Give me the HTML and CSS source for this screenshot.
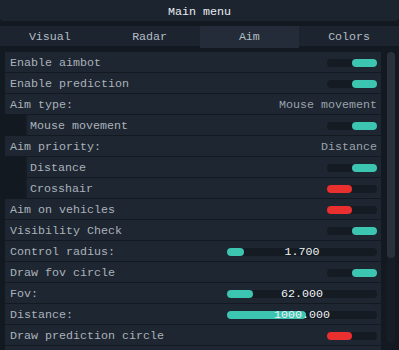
FILE: index.html
```html
<!DOCTYPE html>
<html lang="en">
<head>
    <meta charset="UTF-8">
    <meta name="viewport" content="width=device-width, initial-scale=1.0">
    <title>Main menu</title>
    <link rel="stylesheet" href="styles.css">
</head>
<body>
    <div class="titlebar">Main menu</div>

    <div class="tabs">
        <div class="tab">Visual</div>
        <div class="tab">Radar</div>
        <div class="tab active">Aim</div>
        <div class="tab">Colors</div>
    </div>

    <main class="content">
        <section class="list">
            <div class="row"><span>Enable aimbot</span><span class="toggle on"></span></div>
            <div class="row"><span>Enable prediction</span><span class="toggle on"></span></div>
            <div class="row"><span>Aim type:</span><span class="value">Mouse movement</span></div>
            <div class="row sub"><span>Mouse movement</span><span class="toggle on"></span></div>
            <div class="row"><span>Aim priority:</span><span class="value">Distance</span></div>
            <div class="row sub"><span>Distance</span><span class="toggle on"></span></div>
            <div class="row sub"><span>Crosshair</span><span class="toggle off"></span></div>
            <div class="row"><span>Aim on vehicles</span><span class="toggle off"></span></div>
            <div class="row"><span>Visibility Check</span><span class="toggle on"></span></div>
            <div class="row">
                <span>Control radius:</span>
                <span class="slider"><span class="fill" style="width: 17px"></span><span class="num">1.700</span></span>
            </div>
            <div class="row"><span>Draw fov circle</span><span class="toggle on"></span></div>
            <div class="row">
                <span>Fov:</span>
                <span class="slider"><span class="fill" style="width: 26px"></span><span class="num">62.000</span></span>
            </div>
            <div class="row">
                <span>Distance:</span>
                <span class="slider"><span class="fill" style="width: 79px"></span><span class="num">1000.000</span></span>
            </div>
            <div class="row"><span>Draw prediction circle</span><span class="toggle off"></span></div>
            <div class="row"></div>
        </section>

        <div class="scrollbar"><div class="thumb"></div></div>
    </main>
</body>
</html>
```

FILE: styles.css
```css
body {
    margin: 0;
    padding: 0;
    height: 350px;
    overflow: hidden;
    background-color: #131920;
    font-family: "Liberation Mono", "DejaVu Sans Mono", monospace;
    font-size: 11.67px;
    color: #aab3bc;
}

.titlebar {
    height: 21px;
    line-height: 24px;
    text-align: center;
    color: #e8ecef;
    background-color: #1c2430;
    border-radius: 0 0 4px 4px;
}

.tabs {
    display: grid;
    grid-template-columns: repeat(4, 1fr);
    height: 20px;
    margin-top: 5px;
    background-color: #1c2430;
}

.tab {
    line-height: 22px;
    text-align: center;
    color: #b4bcc4;
}

.tab.active {
    background-color: #232c38;
}

.content {
    display: flex;
    padding: 6px 0 0 5px;
}

.list {
    display: flex;
    flex-direction: column;
    gap: 1px;
    width: 376px;
}

.row {
    display: flex;
    align-items: center;
    justify-content: space-between;
    flex-shrink: 0;
    height: 20px;
    padding: 1px 4px 0 5px;
    box-sizing: border-box;
    background-color: #1e2631;
}

.row.sub {
    margin-left: 20px;
    border-left: 2px solid #161c24;
    padding-left: 3px;
}

.value {
    color: #9aa3ac;
}

.toggle {
    position: relative;
    width: 50px;
    height: 8px;
    border-radius: 4px;
    background-color: #151b23;
}

.toggle::after {
    content: "";
    position: absolute;
    top: 0;
    width: 25px;
    height: 8px;
    border-radius: 4px;
}

.toggle.on::after {
    right: 0;
    background-color: #3cc6b2;
}

.toggle.off::after {
    left: 0;
    background-color: #ea2f2f;
}

.slider {
    position: relative;
    width: 150px;
    height: 8px;
    border-radius: 4px;
    background-color: #151b23;
}

.fill {
    display: block;
    height: 8px;
    border-radius: 4px;
    background-color: #3cc6b2;
}

.num {
    position: absolute;
    left: 0;
    right: 0;
    top: -5px;
    line-height: 18px;
    text-align: center;
    color: #eef2f4;
}

.scrollbar {
    width: 8px;
    height: 291px;
    margin-left: 6px;
    border-radius: 4px;
    background-color: #171d25;
}

.thumb {
    height: 206px;
    border-radius: 4px;
    background-color: #29313b;
}
```
